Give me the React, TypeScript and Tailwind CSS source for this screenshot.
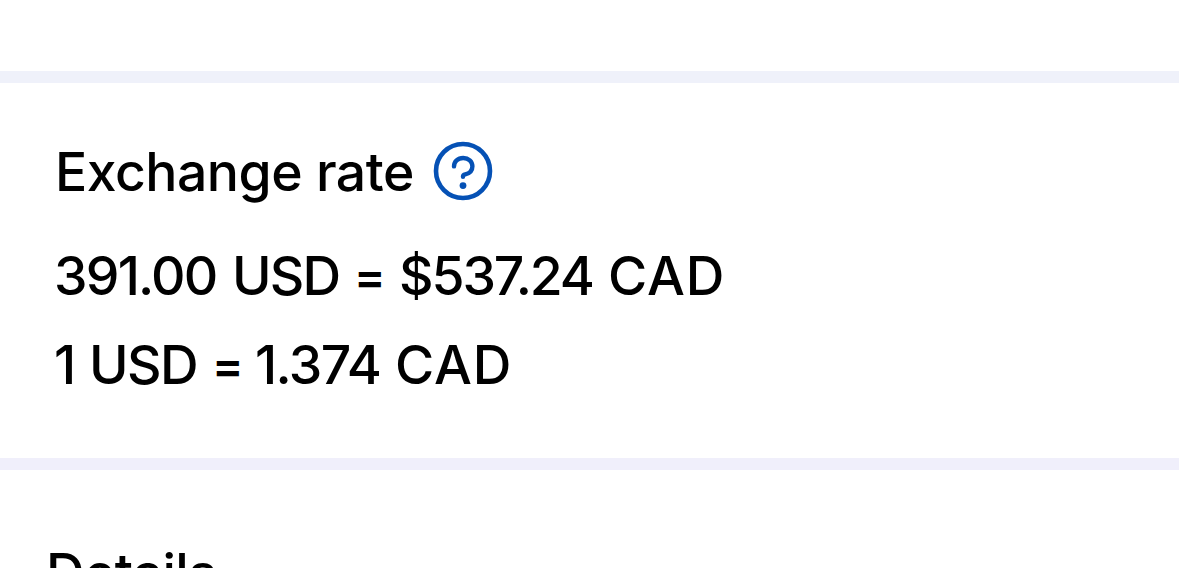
interface RatePart {
  text: string;
  className: string;
}

interface RateLineProps {
  parts: RatePart[];
}

const sentAmount: RatePart[] = [
  { text: "391.00", className: "w-[178px] tracking-[-1.8px]" },
  { text: "USD", className: "w-[122px] tracking-[-1.8px]" },
  { text: "=", className: "w-[45px] text-[47px] font-semibold" },
  { text: "$537.24", className: "w-[209px] tracking-[-2.1px]" },
  { text: "CAD", className: "tracking-[0.9px]" },
];

const unitRate: RatePart[] = [
  { text: "1", className: "w-[35px]" },
  { text: "USD", className: "w-[123px] tracking-[-1.6px]" },
  { text: "=", className: "w-[43px] text-[47px] font-semibold" },
  { text: "1.374", className: "w-[140px] tracking-[-1.6px]" },
  { text: "CAD", className: "tracking-[0.9px]" },
];

function RateLine({ parts }: RateLineProps) {
  return (
    <p className="flex h-[89px] whitespace-nowrap leading-[89px]">
      {parts.map((part, index) => (
        <span key={index} className={part.className}>{part.text}</span>
      ))}
    </p>
  );
}

function HelpIcon() {
  return (
    <svg viewBox="0 0 60 60" className="h-[60px] w-[60px]" fill="none">
      <circle cx="30" cy="30" r="27" stroke="#0551b5" strokeWidth="4.6" />
      <path
        d="M21 25.4C21 20.6 24.8 17 30.2 17c5.3 0 9.2 3.6 9.2 8.3 0 4.3-3 7.2-7.2 8.1-1.5.3-2.2.9-2.2 2v0.3"
        stroke="#0551b5"
        strokeWidth="4.4"
        strokeLinecap="round"
      />
      <circle cx="30" cy="44.6" r="3.4" fill="#0551b5" />
    </svg>
  );
}

export default function App() {
  return (
    <div className="h-[568px] w-full overflow-hidden bg-white font-['Inter',sans-serif] text-[53.5px] font-medium text-black">
      <div className="h-[71px]" />
      <div className="h-3 bg-[#eff1fa]" />
      <section className="h-[375px] pl-[54px] pt-[48px]">
        <div className="flex h-20 items-center">
          <h2 className="w-[379px] whitespace-nowrap pl-px pt-0.5 leading-[80px] tracking-[-0.5px]">Exchange rate</h2>
          <HelpIcon />
        </div>
        <div className="pt-[20px]">
          <RateLine parts={sentAmount} />
          <RateLine parts={unitRate} />
        </div>
      </section>
      <div className="h-3 bg-[#f0effb]" />
      <section className="pl-[46px] pt-[63px]">
        <h2 className="leading-[80px] tracking-[-0.6px]">Details</h2>
      </section>
    </div>
  );
}
